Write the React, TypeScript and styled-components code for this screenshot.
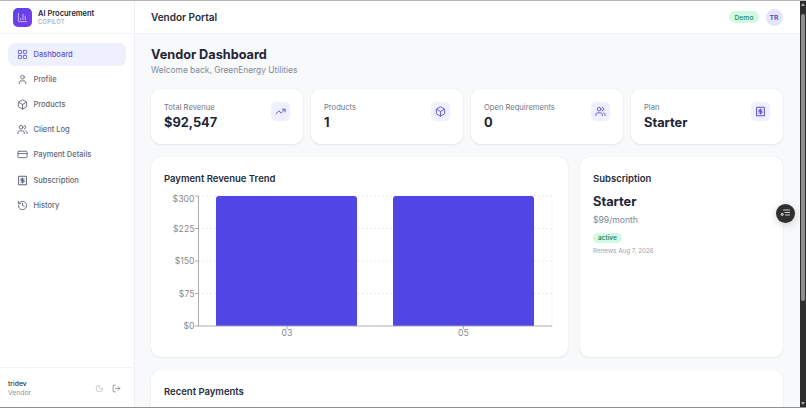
import React from 'react';
import styled, { createGlobalStyle } from 'styled-components';
import {
    LayoutGrid,
    User,
    Box,
    Users,
    CreditCard,
    History,
    TrendingUp,
    Moon,
    LogOut,
    ChartColumn,
} from 'lucide-react';

const GlobalStyle = createGlobalStyle`
    html, body {
        margin: 0;
        padding: 0;
        height: 100%;
        overflow: hidden;
        background: #fff;
        font-family: Inter, "Liberation Sans", sans-serif;
    }
    * {
        box-sizing: border-box;
    }
`;

const Frame = styled.div`
    position: relative;
    display: flex;
    width: 806px;
    height: 408px;
    overflow: hidden;
    border-top: 1px solid #b5b5b2;
    border-bottom: 1px solid #8f8f8f;
`;

const Sidebar = styled.aside`
    display: flex;
    flex-direction: column;
    flex: 0 0 135px;
    background: #fff;
    border-right: 1px solid #eef0f4;
`;

const Brand = styled.div`
    display: flex;
    align-items: center;
    gap: 6px;
    height: 33px;
    padding: 0 12px 0 13px;
    border-bottom: 1px solid #f1f3f6;
`;

const BrandMark = styled.div`
    display: flex;
    align-items: center;
    justify-content: center;
    width: 19px;
    height: 19px;
    border-radius: 5px;
    color: #e6dcff;
    background: linear-gradient(135deg, #5b45e8, #7c3aed);
`;

const BrandText = styled.div`
    display: flex;
    flex-direction: column;
`;

const BrandName = styled.span`
    font-size: 7.5px;
    line-height: 10px;
    font-weight: 600;
    color: #1e2535;
`;

const BrandSub = styled.span`
    font-size: 5.6px;
    line-height: 7px;
    letter-spacing: 0.4px;
    color: #8b93a3;
`;

const Nav = styled.nav`
    display: flex;
    flex-direction: column;
    gap: 2px;
    padding: 8.5px 8px 0;
    flex: 1;
`;

const NavItem = styled.div<{ $active?: boolean }>`
    display: flex;
    align-items: center;
    gap: 6px;
    height: 23.2px;
    padding: 0 8.5px;
    border-radius: 7px;
    font-size: 7.5px;
    font-weight: 500;
    color: ${({ $active }) => ($active ? '#5b50d6' : '#5f6878')};
    background: ${({ $active }) => ($active ? '#eef0fd' : 'transparent')};

    svg {
        flex: none;
        color: ${({ $active }) => ($active ? '#6a5fdf' : '#5f6878')};
    }
`;

const SidebarFooter = styled.div`
    display: flex;
    align-items: center;
    height: 40px;
    padding: 1px 13px 0 8px;
    border-top: 1px solid #f1f3f6;
`;

const UserBlock = styled.div`
    display: flex;
    flex-direction: column;
    flex: 1;
`;

const UserName = styled.span`
    font-size: 6.8px;
    line-height: 9px;
    font-weight: 500;
    color: #2a3140;
`;

const UserRole = styled.span`
    font-size: 6.8px;
    line-height: 9px;
    color: #8b93a3;
`;

const FooterIcons = styled.div`
    display: flex;
    align-items: center;
    gap: 8px;
    color: #6b7280;
`;

const Main = styled.main`
    display: flex;
    flex-direction: column;
    flex: 1;
    min-width: 0;
    background: #f8f9fb;
`;

const Header = styled.header`
    display: flex;
    align-items: center;
    justify-content: space-between;
    flex: none;
    height: 33px;
    padding: 0 17.5px 0 16px;
    background: #fff;
    border-bottom: 1px solid #f0f2f5;
`;

const HeaderTitle = styled.h1`
    margin: 0;
    font-size: 10px;
    font-weight: 600;
    color: #262d3b;
`;

const HeaderRight = styled.div`
    display: flex;
    align-items: center;
    gap: 6.5px;
`;

const DemoBadge = styled.span`
    display: flex;
    align-items: center;
    justify-content: center;
    width: 30px;
    height: 12px;
    border-radius: 6px;
    font-size: 6.8px;
    font-weight: 500;
    color: #1f8a63;
    background: #d1fae5;
`;

const Avatar = styled.div`
    display: flex;
    align-items: center;
    justify-content: center;
    width: 17px;
    height: 17px;
    border-radius: 50%;
    font-size: 6.8px;
    font-weight: 600;
    color: #4f46c8;
    background: #e3e5fb;
`;

const Content = styled.div`
    display: flex;
    flex-direction: column;
    flex: 1;
    padding: 13px 17px 0 16px;
    overflow: hidden;
`;

const PageTitle = styled.h2`
    margin: 0;
    font-size: 12.7px;
    line-height: 16px;
    font-weight: 700;
    color: #1e2535;
`;

const PageSub = styled.p`
    margin: 1px 0 0;
    font-size: 8.4px;
    line-height: 12px;
    color: #808898;
`;

const StatGrid = styled.div`
    display: grid;
    grid-template-columns: repeat(4, 1fr);
    gap: 8px;
    margin-top: 13px;
`;

const Card = styled.section`
    background: #fff;
    border-radius: 9px;
    box-shadow: 0 0 1px rgba(30, 40, 60, 0.14), 0 1px 2px rgba(30, 40, 60, 0.07);
`;

const StatCard = styled(Card)`
    display: flex;
    align-items: flex-start;
    justify-content: space-between;
    height: 55px;
    padding: 13px 13px 0;
`;

const StatLabel = styled.div`
    margin-top: 1px;
    font-size: 7.6px;
    line-height: 10px;
    color: #6f7787;
`;

const StatValue = styled.div`
    margin-top: 1px;
    font-size: 12.8px;
    line-height: 17px;
    font-weight: 700;
    color: #1e2535;
`;

const StatIcon = styled.div`
    display: flex;
    align-items: center;
    justify-content: center;
    flex: none;
    width: 19px;
    height: 19px;
    border-radius: 5px;
    color: #5b50d6;
    background: #eef0fd;
`;

const PanelRow = styled.div`
    display: grid;
    grid-template-columns: 417px 203px;
    gap: 12px;
    margin-top: 13px;
`;

const ChartCard = styled(Card)`
    height: 200px;
    padding: 16px 13px 0;
`;

const SubscriptionCard = styled(Card)`
    height: 200px;
    padding: 16px 13px 0;
`;

const PanelTitle = styled.h3`
    margin: 0;
    font-size: 9.5px;
    line-height: 12px;
    font-weight: 600;
    color: #262d3b;
`;

const PlanName = styled.div`
    margin-top: 7.5px;
    font-size: 12.8px;
    line-height: 17px;
    font-weight: 700;
    color: #1e2535;
`;

const PlanPrice = styled.div`
    margin-top: 4.5px;
    font-size: 8.6px;
    line-height: 12px;
    color: #808898;
`;

const ActiveBadge = styled.div`
    width: fit-content;
    margin-top: 7px;
    padding: 0 5px;
    height: 10px;
    border-radius: 5px;
    font-size: 6.5px;
    line-height: 10px;
    font-weight: 500;
    color: #15795a;
    background: #d1fae5;
`;

const RenewText = styled.div`
    margin-top: 4px;
    font-size: 6.3px;
    line-height: 9px;
    color: #9aa1b0;
`;

const PaymentsCard = styled(Card)`
    flex: none;
    height: 60px;
    margin-top: 13px;
    padding: 16px 13px 0;
`;

const ChartSvg = styled.svg`
    display: block;
    margin-top: 7px;
    font-family: Inter, "Liberation Sans", sans-serif;
    font-size: 8.7px;
`;

const Scrollbar = styled.div`
    display: flex;
    flex-direction: column;
    align-items: center;
    justify-content: space-between;
    flex: 0 0 6px;
    background: #2d2d2d;
`;

const ScrollThumb = styled.div`
    width: 4px;
    height: 287px;
    margin-top: 6px;
    margin-bottom: auto;
    border-radius: 2px;
    background: #8e8e8e;
`;

const ScrollArrow = styled.div<{ $down?: boolean }>`
    width: 0;
    height: 0;
    margin: 2px 0;
    border-left: 2px solid transparent;
    border-right: 2px solid transparent;
    ${({ $down }) => ($down ? 'border-top: 3px solid #a8a8a8;' : 'border-bottom: 3px solid #a8a8a8;')}
`;

const FloatingButton = styled.button`
    position: absolute;
    top: 202.5px;
    left: 775.5px;
    display: flex;
    align-items: center;
    justify-content: center;
    width: 19px;
    height: 19px;
    padding: 0;
    border: none;
    border-radius: 50%;
    color: #e5e5e5;
    background: #2f2f2f;
    box-shadow: 0 2px 8px rgba(0, 0, 0, 0.18);
`;

// lucide has no plain "$ in a sheet" icon, this one is a rect plus its dollar strokes
const SubscriptionIcon = ({ size }: { size: number }) => (
    <svg width={size} height={size} viewBox="0 0 24 24" fill="none" stroke="currentColor" strokeWidth="2.2" strokeLinecap="round" strokeLinejoin="round">
        <rect x="3.5" y="2.5" width="17" height="19" rx="1.5" />
        <path d="M15.5 8.5h-5a1.8 1.8 0 1 0 0 3.5h3a1.8 1.8 0 1 1 0 3.5h-5" />
        <path d="M12 6.5v11" />
    </svg>
);

const PanelToggleIcon = () => (
    <svg width="12" height="12" viewBox="0 0 12 12" fill="none" stroke="currentColor" strokeWidth="0.9" strokeLinecap="round">
        <path d="M4.5 3h6M6 5.5h4.5M6.5 8h4" />
        <circle cx="3.2" cy="7.4" r="1.4" fill="currentColor" stroke="none" />
        <circle cx="3.2" cy="7.4" r="0.5" fill="#2f2f2f" stroke="none" />
    </svg>
);

const navItems = [
    { label: 'Dashboard', icon: LayoutGrid, active: true },
    { label: 'Profile', icon: User },
    { label: 'Products', icon: Box },
    { label: 'Client Log', icon: Users },
    { label: 'Payment Details', icon: CreditCard },
    { label: 'Subscription', icon: SubscriptionIcon },
    { label: 'History', icon: History },
];

const stats = [
    { label: 'Total Revenue', value: '$92,547', icon: TrendingUp },
    { label: 'Products', value: '1', icon: Box },
    { label: 'Open Requirements', value: '0', icon: Users },
    { label: 'Plan', value: 'Starter', icon: SubscriptionIcon },
];

const ticks = [
    { label: '$300', y: 0 },
    { label: '$225', y: 32.5 },
    { label: '$150', y: 65 },
    { label: '$75', y: 97.5 },
    { label: '$0', y: 130 },
];

const RevenueChart = () => (
    <ChartSvg width="391" height="155" viewBox="164 192 391 155">
        <g stroke="#dfe1e5" strokeDasharray="2 2" strokeWidth="0.7" fill="none">
            {ticks.slice(0, 4).map((t) => (
                <line key={t.label} x1="198" x2="552" y1={196 + t.y} y2={196 + t.y} />
            ))}
            <line x1="552" x2="552" y1="196" y2="326" />
        </g>
        <path d="M216 326V199a3 3 0 0 1 3-3h135a3 3 0 0 1 3 3v127z" fill="#4f46e5" />
        <path d="M393 326V199a3 3 0 0 1 3-3h135a3 3 0 0 1 3 3v127z" fill="#4f46e5" />
        <g stroke="#a3a3a3" strokeWidth="0.9" fill="none">
            <line x1="198.5" x2="198.5" y1="196" y2="326" />
            <line x1="198" x2="552" y1="326" y2="326" />
            {ticks.map((t) => (
                <line key={t.label} x1="195" x2="198" y1={196 + t.y} y2={196 + t.y} />
            ))}
            <line x1="287" x2="287" y1="326" y2="329" />
            <line x1="463.5" x2="463.5" y1="326" y2="329" />
        </g>
        <g fill="#8a8a8a" textAnchor="end">
            {ticks.map((t, i) => (
                <text key={t.label} x="194.5" y={196 + t.y + (i === 0 ? 6.2 : 3.2)}>
                    {t.label}
                </text>
            ))}
        </g>
        <g fill="#8a8a8a" textAnchor="middle">
            <text x="287" y="336">03</text>
            <text x="463.5" y="336">05</text>
        </g>
    </ChartSvg>
);

export default function App() {
    return (
        <>
            <GlobalStyle />
            <Frame>
                <Sidebar>
                    <Brand>
                        <BrandMark>
                            <ChartColumn size={11} strokeWidth={1.6} />
                        </BrandMark>
                        <BrandText>
                            <BrandName>AI Procurement</BrandName>
                            <BrandSub>COPILOT</BrandSub>
                        </BrandText>
                    </Brand>
                    <Nav>
                        {navItems.map(({ label, icon: Icon, active }) => (
                            <NavItem key={label} $active={active}>
                                <Icon size={11} strokeWidth={2} />
                                {label}
                            </NavItem>
                        ))}
                    </Nav>
                    <SidebarFooter>
                        <UserBlock>
                            <UserName>tridev</UserName>
                            <UserRole>Vendor</UserRole>
                        </UserBlock>
                        <FooterIcons>
                            <Moon size={9} strokeWidth={1.6} color="#a5abb7" />
                            <LogOut size={9} strokeWidth={1.8} />
                        </FooterIcons>
                    </SidebarFooter>
                </Sidebar>
                <Main>
                    <Header>
                        <HeaderTitle>Vendor Portal</HeaderTitle>
                        <HeaderRight>
                            <DemoBadge>Demo</DemoBadge>
                            <Avatar>TR</Avatar>
                        </HeaderRight>
                    </Header>
                    <Content>
                        <PageTitle>Vendor Dashboard</PageTitle>
                        <PageSub>Welcome back, GreenEnergy Utilities</PageSub>
                        <StatGrid>
                            {stats.map(({ label, value, icon: Icon }) => (
                                <StatCard key={label}>
                                    <div>
                                        <StatLabel>{label}</StatLabel>
                                        <StatValue>{value}</StatValue>
                                    </div>
                                    <StatIcon>
                                        <Icon size={11} strokeWidth={2} />
                                    </StatIcon>
                                </StatCard>
                            ))}
                        </StatGrid>
                        <PanelRow>
                            <ChartCard>
                                <PanelTitle>Payment Revenue Trend</PanelTitle>
                                <RevenueChart />
                            </ChartCard>
                            <SubscriptionCard>
                                <PanelTitle>Subscription</PanelTitle>
                                <PlanName>Starter</PlanName>
                                <PlanPrice>$99/month</PlanPrice>
                                <ActiveBadge>active</ActiveBadge>
                                <RenewText>Renews Aug 7, 2026</RenewText>
                            </SubscriptionCard>
                        </PanelRow>
                        <PaymentsCard>
                            <PanelTitle>Recent Payments</PanelTitle>
                        </PaymentsCard>
                    </Content>
                </Main>
                <Scrollbar>
                    <ScrollArrow />
                    <ScrollThumb />
                    <ScrollArrow $down />
                </Scrollbar>
                <FloatingButton aria-label="Settings">
                    <PanelToggleIcon />
                </FloatingButton>
            </Frame>
        </>
    );
}
